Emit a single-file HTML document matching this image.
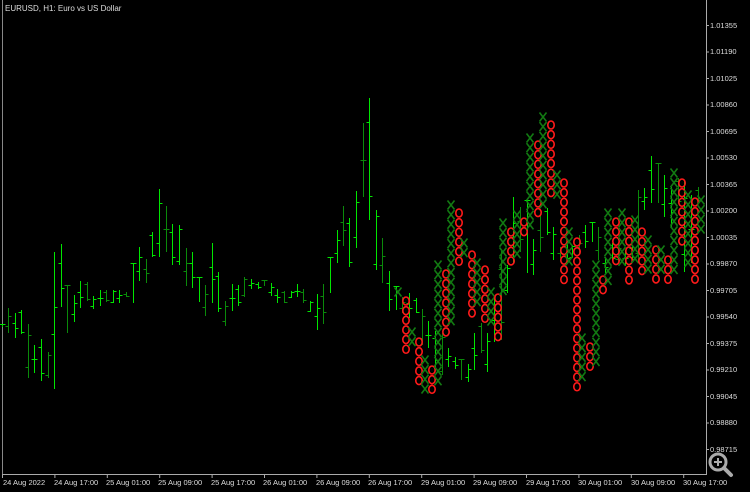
<!DOCTYPE html><html><head><style>
html,body{margin:0;padding:0;background:#000;width:750px;height:492px;overflow:hidden}
svg{display:block}
.t{font-family:"Liberation Sans",sans-serif;font-size:8px;fill:#ddd}
.p{font-family:"Liberation Sans",sans-serif;font-size:7.5px;fill:#ddd}
</style></head><body>
<svg id="s" width="750" height="492" xmlns="http://www.w3.org/2000/svg">
<rect width="750" height="492" fill="#000"/>
<line x1="2.5" y1="0" x2="2.5" y2="474" stroke="#888" stroke-width="1"/>
<line x1="706.5" y1="0" x2="706.5" y2="474" stroke="#aaa"/>
<line x1="2" y1="474.5" x2="707" y2="474.5" stroke="#aaa"/>
<text class="t" x="5" y="11">EURUSD, H1:  Euro vs US Dollar</text>
<g id="bars"></g><g id="pf"></g>
<g class="p">
<text x="710" y="28">1.01355</text><text x="710" y="54">1.01190</text><text x="710" y="81">1.01025</text>
<text x="710" y="107">1.00860</text><text x="710" y="134">1.00695</text><text x="710" y="160">1.00530</text>
<text x="710" y="187">1.00365</text><text x="710" y="213">1.00200</text><text x="710" y="240">1.00035</text>
<text x="710" y="266">0.99870</text><text x="710" y="293">0.99705</text><text x="710" y="319">0.99540</text>
<text x="710" y="346">0.99375</text><text x="710" y="372">0.99210</text><text x="710" y="399">0.99045</text>
<text x="710" y="425">0.98880</text><text x="710" y="452">0.98715</text>
</g>
<g class="p">
<text x="3" y="485">24 Aug 2022</text><text x="54" y="485">24 Aug 17:00</text><text x="106" y="485">25 Aug 01:00</text>
<text x="158" y="485">25 Aug 09:00</text><text x="211" y="485">25 Aug 17:00</text><text x="263" y="485">26 Aug 01:00</text>
<text x="316" y="485">26 Aug 09:00</text><text x="368" y="485">26 Aug 17:00</text><text x="421" y="485">29 Aug 01:00</text>
<text x="473" y="485">29 Aug 09:00</text><text x="526" y="485">29 Aug 17:00</text><text x="578" y="485">30 Aug 01:00</text>
<text x="631" y="485">30 Aug 09:00</text><text x="683" y="485">30 Aug 17:00</text>
</g>
<g id="ticks" stroke="#aaa"></g>
<g>
<circle cx="718" cy="462" r="8" fill="none" stroke="#aaa" stroke-width="3"/>
<line x1="724" y1="468" x2="731" y2="475" stroke="#aaa" stroke-width="4" stroke-linecap="round"/>
<line x1="714" y1="462" x2="722" y2="462" stroke="#aaa" stroke-width="2"/>
<line x1="718" y1="458" x2="718" y2="466" stroke="#aaa" stroke-width="2"/>
</g>
</svg>
<script>
var NS="http://www.w3.org/2000/svg";
function el(p,n,a){var e=document.createElementNS(NS,n);for(var k in a)e.setAttribute(k,a[k]);p.appendChild(e);return e;}
var tk=document.getElementById("ticks");
for(var i=0;i<14;i++){var x=2+i*52.4;el(tk,"line",{x1:x+.5,y1:474,x2:x+.5,y2:478});}
for(var i=0;i<17;i++){var y=25+i*26.5;el(tk,"line",{x1:706,y1:y+.5,x2:709,y2:y+.5});}
var B=[[2,324,327],[8,308,333],[15,313,338],[21,310,334],[28,324,378],[34,345,373],[41,339,381],[48,352,378],[54,252,389],[61,244,307],[67,285,333],[74,295,322],[80,281,308],[87,282,301],[93,296,309],[100,290,306],[106,290,302],[113,290,303],[119,290,303],[126,292,297],[133,263,303],[139,247,281],[146,259,283],[152,232,257],[159,189,257],[166,206,252],[172,224,265],[179,225,265],[186,248,286],[192,252,288],[199,277,302],[205,285,316],[212,243,303],[218,272,312],[225,301,326],[232,284,311],[238,285,306],[244,277,297],[251,279,289],[258,282,289],[264,280,286],[271,283,296],[277,289,303],[284,291,303],[291,291,298],[297,284,297],[303,289,303],[310,301,312],[317,294,330],[323,284,324],[330,257,293],[337,230,263],[343,206,246],[349,218,267],[356,191,248],[363,123,197],[369,98,220],[376,210,270],[382,238,283],[389,271,311],[396,286,310],[402,297,313],[409,293,318],[416,298,313],[422,309,345],[428,321,348],[435,331,367],[442,333,375],[448,348,367],[455,357,369],[461,359,380],[468,364,382],[474,333,370],[481,323,353],[487,333,372],[494,298,342],[501,251,340],[507,265,293],[513,197,263],[520,207,252],[527,200,273],[533,239,275],[540,215,252],[547,208,235],[553,227,260],[560,247,258],[567,240,262],[572,245,258],[579,235,255],[585,225,248],[592,222,242],[598,227,260],[605,257,273],[612,243,260],[618,245,262],[625,250,266],[632,245,262],[638,190,260],[644,188,210],[651,156,203],[658,163,203],[664,175,217],[671,187,228],[678,178,203],[684,180,272],[691,195,263],[698,187,203]];
var bg=document.getElementById("bars");
B.forEach(function(b,i){var c=(i%3==1)?"#0a8a0a":"#00e600";var x=b[0]+.5;
el(bg,"line",{x1:x,y1:b[1],x2:x,y2:b[2],stroke:c});
var o=b[1]+(b[2]-b[1])*((i*37%10)/10),cl=b[1]+(b[2]-b[1])*((i*53%10)/10);
el(bg,"line",{x1:x-3,y1:Math.round(o)+.5,x2:x,y2:Math.round(o)+.5,stroke:c});
el(bg,"line",{x1:x,y1:Math.round(cl)+.5,x2:x+3,y2:Math.round(cl)+.5,stroke:c});});
var P=[["X",398,287,300],["O",406,296,357],["X",412,327,348],["O",419,337,385],["X",425,355,390],["O",432,365,395],["X",438,260,387],["O",446,269,337],["X",451,200,330],["O",459,208,270],["X",464,238,260],["O",472,250,318],["X",477,258,307],["O",485,265,327],["X",491,287,330],["O",498,293,337],["X",503,218,293],["O",511,227,269],["X",517,210,260],["O",524,217,240],["X",530,133,230],["O",538,140,220],["X",543,112,210],["O",551,120,202],["X",557,170,195],["O",564,178,280],["X",569,227,270],["O",577,237,388],["X",582,333,377],["O",590,342,375],["X",596,260,367],["O",603,275,298],["X",608,208,287],["O",616,217,262],["X",622,208,270],["O",629,217,282],["X",635,215,265],["O",642,227,272],["X",648,235,270],["O",656,245,282],["X",661,245,270],["O",668,255,282],["X",674,168,272],["O",682,178,243],["X",688,190,272],["O",695,197,282],["X",701,195,235]];
var pg=document.getElementById("pf");
P.forEach(function(p){var n=Math.max(1,Math.round((p[3]-p[2]-10)/9.65)+1);
for(var k=0;k<n;k++){var yc=p[2]+5+k*9.65;
if(p[0]=="O"){el(pg,"ellipse",{cx:p[1],cy:yc,rx:3.2,ry:4,fill:"none",stroke:"#ff1a1a","stroke-width":1.6});}
else{el(pg,"path",{d:"M"+(p[1]-3.5)+" "+(yc-4.5)+"L"+(p[1]+3.5)+" "+(yc+4.5)+"M"+(p[1]+3.5)+" "+(yc-4.5)+"L"+(p[1]-3.5)+" "+(yc+4.5),stroke:"#127a12","stroke-width":1.6,fill:"none"});}}});
</script>
</body></html>
